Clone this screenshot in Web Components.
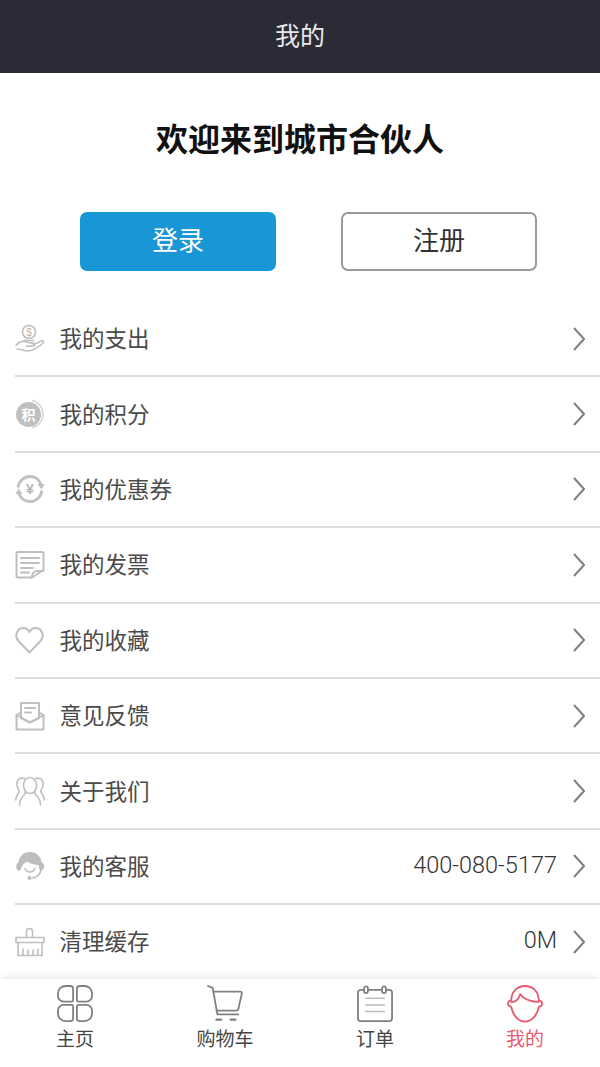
<!DOCTYPE html>
<html lang="zh">
<head>
<meta charset="utf-8">
<title>我的</title>
<style>
  html, body { margin: 0; padding: 0; background: #fff; overflow: hidden; }
  body { font-family: "Noto Sans CJK SC", "Noto Sans", sans-serif; }
  .ic { fill: none; stroke: #bfbfbf; stroke-width: 2; stroke-linecap: round; stroke-linejoin: round; }
  .tab { fill: none; stroke: #808080; stroke-width: 1.900; stroke-linecap: round; stroke-linejoin: round; }
</style>
</head>
<body>
<app-shell>
  <nav-bar slot="top">我的</nav-bar>
  <welcome-panel title-text="欢迎来到城市合伙人">
    <auth-button kind="primary">登录</auth-button>
    <auth-button>注册</auth-button>
  </welcome-panel>

  <menu-row label="我的支出">
    <svg slot="icon" class="ic" width="30" height="30" viewBox="0 0 30 30" style="stroke-width:1.600">
      <circle cx="14" cy="8" r="6.500"/>
      <text x="14" y="11.500" font-size="10" text-anchor="middle" font-family="Liberation Sans" fill="#b5b5b5" stroke="none">$</text>
      <path d="M9 16.500h10"/>
      <path d="M1 21.500c4-5 8-5 12-3l5 .6c2.500.4 2.500 3-.5 3h-6"/>
      <path d="M18.500 20.500l7.500-3.500c2.500-1 3.500 1 1.500 2.500-4 3.500-9 7.500-15 7.500-4 0-6-2-10.500-2"/>
    </svg>
  </menu-row>
  <menu-row label="我的积分">
    <svg slot="icon" width="30" height="30" viewBox="0 0 30 30">
      <circle cx="13.500" cy="15.500" r="12.500" fill="#c0c0c0"/>
      <path d="M17 1.500c6 1 11 6.500 11 13.500s-5 12.500-11 13.500" fill="none" stroke="#d6d6d6" stroke-width="1.500"/>
      <text x="13.500" y="20.500" font-size="14" font-weight="700" text-anchor="middle" font-family="Noto Sans CJK SC" fill="#fff">积</text>
    </svg>
  </menu-row>
  <menu-row label="我的优惠券">
    <svg slot="icon" width="30" height="30" viewBox="0 0 30 30" fill="none" stroke="#c0c0c0" stroke-width="2.800">
      <path d="M3 13.500C4 7 9 2.500 15 2.500c5 0 9.500 3 11 8"/>
      <path d="M27 16.500C26 23 21 27.500 15 27.500c-5 0-9.500-3-11-8"/>
      <path d="M22.500 10h7l-3 5.500zM7.500 20h-7l3-5.500z" fill="#c0c0c0" stroke="none"/>
      <text x="15" y="20" font-size="14" font-weight="700" text-anchor="middle" font-family="Liberation Sans" fill="#b5b5b5" stroke="none">¥</text>
    </svg>
  </menu-row>
  <menu-row label="我的发票">
    <svg slot="icon" class="ic" width="30" height="30" viewBox="0 0 30 30">
      <path d="M17 27.500H3a1.500 1.500 0 0 1-1.500-1.500V3.500A1.500 1.500 0 0 1 3 2h24a1.500 1.500 0 0 1 1.500 1.500V20z"/>
      <path d="M6 8h18M6 13h18M6 18h12M6 22.500h8"/>
      <path d="M17 27.500c0-4 2-6.500 5.500-6.500h6"/>
    </svg>
  </menu-row>
  <menu-row label="我的收藏">
    <svg slot="icon" class="ic" width="30" height="30" viewBox="0 0 30 30">
      <path d="M14.500 27.500L3.500 16C-1 11 2 3 8.500 3c3 0 4.500 1.500 6 4 1.500-2.500 3-4 6-4C27 3 30 11 25.500 16z"/>
    </svg>
  </menu-row>
  <menu-row label="意见反馈">
    <svg slot="icon" class="ic" width="30" height="30" viewBox="0 0 30 30">
      <path d="M6 11.500L1.500 14v14.500h27V14L24 11.500"/>
      <path d="M6 17V2h18v15l-9 4.500z"/>
      <path d="M1.500 14L15 21.500 28.500 14"/>
      <path d="M10 7h10M10 11.500h6"/>
    </svg>
  </menu-row>
  <menu-row label="关于我们">
    <svg slot="icon" class="ic" width="30" height="30" viewBox="0 0 30 30" style="stroke-width:1.600">
      <ellipse cx="15" cy="9.500" rx="6.500" ry="8"/>
      <path d="M10.500 15.500c.5 4-6 4.500-6 13.500M19.500 15.500c-.5 4 6 4.500 6 13.500"/>
      <path d="M9.500 2.500C5 1 1.800 4 1.800 8c0 3 1 5 2.500 6.500C4 18 1 19 .8 24M20.500 2.500C25 1 28.200 4 28.200 8c0 3-1 5-2.500 6.500.3 3.500 3.300 4.500 3.500 9.500"/>
    </svg>
  </menu-row>
  <menu-row label="我的客服" value="400-080-5177">
    <svg slot="icon" width="30" height="30" viewBox="0 0 30 30">
      <path d="M15 1C8 1 4 6 3.500 11.500 1 12.500.5 17 2.500 19c1 1 2.500 1 3 0 1.500-4 3-7 7-8.500 3 2.500 7 3.500 11 3.500l1 4.500c1 1.500 3 1 4-.5 1.500-2.500.5-6-2-7C26 6 22 1 15 1z" fill="#bdbdbd"/>
      <path d="M10 17.500c1 2.500 3 3.500 5 3.500s4-1 5-3.500" fill="none" stroke="#bdbdbd" stroke-width="1.500" stroke-linecap="round"/>
      <path d="M26 19c-1 5-4 7.500-9.500 8" fill="none" stroke="#bdbdbd" stroke-width="1.500"/>
      <circle cx="14.500" cy="27" r="2" fill="#bdbdbd"/>
    </svg>
  </menu-row>
  <menu-row label="清理缓存" value="0M">
    <svg slot="icon" class="ic" width="30" height="30" viewBox="0 0 30 30" style="stroke-width:1.600">
      <path d="M11.500 10V4.500a3 3 0 0 1 6 0V10"/>
      <path d="M1 10.500h28v5H1z"/>
      <path d="M3 15.500v13h24v-13"/>
      <path d="M8 28v-6M13 28v-5M18 28v-5M23 28v-6"/>
    </svg>
  </menu-row>

  <tab-bar slot="bottom">
    <tab-item label="主页">
      <svg class="tab" width="36" height="38" viewBox="0 0 38 40">
        <path d="M9 1h5a3 3 0 0 1 3 3v12a1.500 1.500 0 0 1-1.500 1.500H7a6 6 0 0 1-6-6V9a8 8 0 0 1 8-8z"/>
        <path d="M29 1h-5a3 3 0 0 0-3 3v12a1.500 1.500 0 0 0 1.500 1.500H31a6 6 0 0 0 6-6V9a8 8 0 0 0-8-8z"/>
        <path d="M7 21h8.500a1.500 1.500 0 0 1 1.500 1.500V35a3 3 0 0 1-3 3H9a8 8 0 0 1-8-8v-3a6 6 0 0 1 6-6z"/>
        <path d="M31 21h-8.500a1.500 1.500 0 0 0-1.500 1.500V35a3 3 0 0 0 3 3h5a8 8 0 0 0 8-8v-3a6 6 0 0 0-6-6z"/>
      </svg>
    </tab-item>
    <tab-item label="购物车">
      <svg class="tab" width="36" height="38" viewBox="0 0 38 40">
        <path d="M1 1l5 2 5 28h22"/>
        <path d="M7 7h28c1.500 0 2 1 1.700 2.300L33 25.500c-.3 1.200-1 1.500-2 1.500H10"/>
        <path d="M10 36.500h5M25 36.500h5" stroke-width="2.400"/>
      </svg>
    </tab-item>
    <tab-item label="订单">
      <svg class="tab" width="36" height="38" viewBox="0 0 38 40">
        <path d="M7 5H4a3 3 0 0 0-3 3v27a3 3 0 0 0 3 3h30a3 3 0 0 0 3-3V8a3 3 0 0 0-3-3h-3M12 5h14"/>
        <rect x="7.500" y="1.500" width="4" height="7" rx="2"/>
        <rect x="26.500" y="1.500" width="4" height="7" rx="2"/>
        <path d="M9 14h20M9 21h20M9 28h20" stroke="#bdbdbd" stroke-width="1.500"/>
      </svg>
    </tab-item>
    <tab-item label="我的" active>
      <svg class="tab" width="36" height="38" viewBox="0 0 38 40" style="stroke:#ea5a70">
        <path d="M4.500 16C4.500 7 11 1 19 1s14.500 6 14.500 15"/>
        <path d="M4 16.500C2 16.500 1 18 1 19.500s1 3 3.500 3.500C6 32 12 38.500 19 38.500S32 32 33.500 23c2.500-.5 3.500-2 3.500-3.500s-1-3-3-3"/>
        <path d="M4.500 18c4 0 8-3 9.500-8.500 3 5 10 8 19.500 8.500"/>
      </svg>
    </tab-item>
  </tab-bar>
</app-shell>

<script>
function define(name, css, html, setup) {
  customElements.define(name, class extends HTMLElement {
    constructor() {
      super();
      this.attachShadow({ mode: 'open' });
      this.shadowRoot.innerHTML = '<style>' + css + '</style>' + html;
    }
    connectedCallback() {
      if (setup) setup(this, this.shadowRoot);
    }
  });
}

define('app-shell', `
  :host { display: flex; flex-direction: column; width: 600px; height: 1067px; overflow: hidden; background: #fff; }
  main { flex: 1; min-height: 0; overflow: hidden; }
`, `<slot name="top"></slot><main><slot></slot></main><slot name="bottom"></slot>`);

define('nav-bar', `
  :host { display: flex; align-items: center; justify-content: center; flex: none; height: 73px; box-sizing: border-box; padding-bottom: 6px; background: #2b2b38; color: #e8e8e8; font-size: 25px; }
`, `<slot></slot>`);

define('welcome-panel', `
  :host { display: block; height: 229px; box-sizing: border-box; padding-top: 41px; }
  h1 { margin: 0; font-size: 32px; line-height: 46px; font-weight: 700; color: #111; text-align: center; }
  .actions { display: flex; gap: 65px; margin-top: 52px; padding-left: 80px; }
`, `<h1></h1><div class="actions"><slot></slot></div>`, (el, root) => {
  root.querySelector('h1').textContent = el.getAttribute('title-text');
});

define('auth-button', `
  :host { display: flex; align-items: center; justify-content: center; box-sizing: border-box; width: 196px; height: 59px; padding-bottom: 7px; border: 2px solid #9a9a9a; border-radius: 7px; background: #fff; color: #333; font-size: 26px; }
  :host([kind="primary"]) { border: none; background: #1996d6; color: #fff; }
`, `<slot></slot>`);

define('menu-row', `
  :host { display: block; height: 75.4px; padding-left: 15px; box-sizing: border-box; }
  .row { display: flex; align-items: center; height: 100%; box-sizing: border-box; padding-right: 15px; border-bottom: 2px solid #dedede; color: #4a4a4a; }
  ::slotted(svg) { flex: none; display: block; }
  .label { flex: 1; margin-left: 14.500px; padding-bottom: 3px; font-size: 22.500px; }
  .value { margin-right: 16px; padding-bottom: 3px; font-family: Roboto, "Noto Sans", sans-serif; font-weight: 300; font-size: 23.500px; color: #333; }
  .chev { flex: none; display: block; }
`, `<div class="row"><slot name="icon"></slot><span class="label"></span><span class="value"></span>
  <svg class="chev" width="12" height="26" viewBox="0 0 12 26"><path d="M1 2l10 11L1 24" fill="none" stroke="#808080" stroke-width="2"/></svg></div>`, (el, root) => {
  root.querySelector('.label').textContent = el.getAttribute('label');
  root.querySelector('.value').textContent = el.getAttribute('value') || '';
});

define('tab-bar', `
  :host { display: grid; grid-template-columns: repeat(4, 150px); flex: none; height: 88px; background: #fff; position: relative; box-shadow: 0 -2px 7px rgba(0,0,0,.09); }
`, `<slot></slot>`);

define('tab-item', `
  :host { display: flex; flex-direction: column; align-items: center; padding-top: 6px; color: #444; font-size: 19px; line-height: 26px; }
  :host([active]) { color: #ea5a70; }
  .text { margin-top: 2px; }
  ::slotted(svg) { display: block; }
`, `<slot></slot><span class="text"></span>`, (el, root) => {
  root.querySelector('.text').textContent = el.getAttribute('label');
});
</script>
</body>
</html>
